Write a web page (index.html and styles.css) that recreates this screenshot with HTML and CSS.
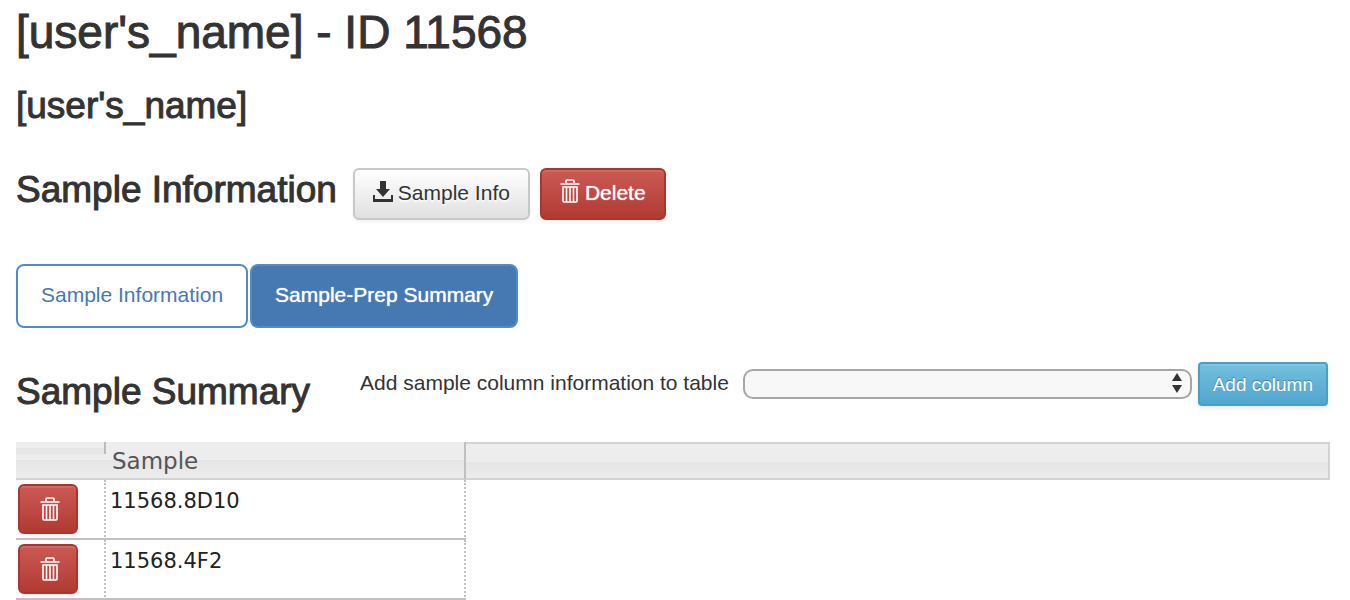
FILE: index.html
```html
<!DOCTYPE html>
<html lang="en">
<head>
<meta charset="utf-8">
<title>Sample Information</title>
<link rel="stylesheet" href="styles.css">
</head>
<body>
<svg class="defs" aria-hidden="true">
  <symbol id="trash" viewBox="0 0 20 24">
    <path d="M6 4V1.8Q6 1 7 1H13Q14 1 14 1.8V4M0.5 5H19.5M3 8V22Q3 23 4 23H16Q17 23 17 22V8ZM6.5 8V23M10 8V23M13.5 8V23" fill="none" stroke="currentColor" stroke-width="1.6"/>
  </symbol>
</svg>
<main class="page">
  <h1 class="title">[user's_name] - ID 11568</h1>
  <h2 class="subtitle">[user's_name]</h2>

  <div class="section-head">
    <h3 class="heading">Sample Information</h3>
    <button class="btn btn-default" type="button">
      <svg class="icon-download" viewBox="0 0 20 22" aria-hidden="true"><path d="M7 0H13V8H17L10 16L3 8H7ZM0 14H2V18H18V14H20V21H0Z" fill="currentColor"/></svg>
      <span>Sample Info</span>
    </button>
    <button class="btn btn-danger" type="button">
      <svg class="icon-trash" aria-hidden="true"><use href="#trash"/></svg>
      <span>Delete</span>
    </button>
  </div>

  <nav class="tabs">
    <button class="tab" type="button">Sample Information</button>
    <button class="tab tab-active" type="button">Sample-Prep Summary</button>
  </nav>

  <div class="summary">
    <h3 class="heading summary-heading">Sample Summary</h3>
    <form class="column-form">
      <label class="column-label" for="column">Add sample column information to table</label>
      <span class="select-wrap">
        <select class="select" id="column"><option></option></select>
        <svg class="select-arrows" viewBox="0 0 10 20" aria-hidden="true"><path d="M5 0L10 8H0ZM0 12H10L5 20Z" fill="#333"/></svg>
      </span>
      <button class="btn btn-info" type="button">Add column</button>
    </form>
  </div>

  <table class="grid">
    <colgroup><col class="col-action"><col class="col-sample"><col></colgroup>
    <thead>
      <tr><th class="head-action"></th><th class="head-sample" scope="col">Sample</th><th class="head-rest"></th></tr>
    </thead>
    <tbody>
      <tr>
        <td class="cell cell-action"><button class="btn btn-danger btn-row" type="button" aria-label="Delete 11568.8D10"><svg class="icon-trash" aria-hidden="true"><use href="#trash"/></svg></button></td>
        <td class="cell cell-sample">11568.8D10</td>
        <td></td>
      </tr>
      <tr>
        <td class="cell cell-action"><button class="btn btn-danger btn-row" type="button" aria-label="Delete 11568.4F2"><svg class="icon-trash" aria-hidden="true"><use href="#trash"/></svg></button></td>
        <td class="cell cell-sample">11568.4F2</td>
        <td></td>
      </tr>
    </tbody>
  </table>
</main>
</body>
</html>
```
FILE: styles.css
```css
* { box-sizing: border-box; }

body {
  margin: 0;
  background: #fff;
  color: #333;
  font: 21px/40px "Liberation Sans", Arial, sans-serif;
}

.defs { position: absolute; width: 0; height: 0; }

.page { padding: 0 20px 0 16px; }

.title, .subtitle, .heading {
  margin: 0;
  font-size: 37px;
  font-weight: normal;
  line-height: 40px;
  -webkit-text-stroke: 1px #333;
}
.title { padding-top: 12px; font-size: 46px; }
.subtitle { margin-top: 34px; }

.section-head { display: flex; align-items: center; gap: 10px; margin-top: 42px; }
.section-head .heading { padding: 0 6px 8px 0; }

.btn {
  display: flex;
  align-items: center;
  justify-content: center;
  margin: 0;
  border: 2px solid;
  border-radius: 6px;
  font: inherit;
  white-space: nowrap;
}
.section-head .btn { height: 52px; padding: 0 18px 2px; gap: 5px; }
.btn-default {
  color: #333;
  border-color: #c8c8c8;
  background: linear-gradient(#fff, #e0e0e0);
  box-shadow: 0 2px 4px rgba(0, 0, 0, .06);
  text-shadow: 0 2px 2px #fff;
}
.btn-danger {
  color: #fff;
  border-color: #ad352e;
  background: linear-gradient(#cb5a55, #b13a32);
  box-shadow: inset 0 2px 0 rgba(255, 255, 255, .1), 0 2px 4px rgba(0, 0, 0, .06);
  text-shadow: 0 0 1px #fff;
}
.btn-info {
  height: 44px;
  padding: 2px 13px 0;
  color: #fff;
  border-color: #4a9fc2;
  border-radius: 4px;
  background: linear-gradient(#74bfdd, #50a6cf);
  box-shadow: inset 0 2px 0 rgba(255, 255, 255, .1), 0 2px 4px rgba(0, 0, 0, .1);
  font-size: 19px;
  text-shadow: 0 -1px 1px rgba(0, 0, 0, .3);
}
.icon-download { width: 20px; height: 22px; margin-bottom: 2px; }
.icon-trash { width: 20px; height: 24px; margin-bottom: 4px; }

.tabs { display: flex; gap: 2px; margin-top: 44px; }
.tab {
  height: 64px;
  padding: 0 23px 2px;
  border: 2px solid #528bc7;
  border-radius: 8px;
  background: #fff;
  color: #4679b2;
  font: inherit;
}
.tab-active { background: #4679b2; color: #fff; text-shadow: 0 0 1px #fff; }

.summary { display: flex; align-items: flex-start; gap: 50px; margin-top: 34px; padding-right: 2px; }
.summary-heading { padding-top: 10px; white-space: nowrap; }
.column-form { display: flex; align-items: center; flex: 1; gap: 6px; }
.column-label { padding: 0 8px 2px 0; white-space: nowrap; }
.select-wrap { position: relative; display: flex; flex: 1; min-width: 60px; }
.select {
  appearance: none;
  width: 100%;
  height: 30px;
  border: 2px solid #a6a6a6;
  border-radius: 10px;
  background: #f8f8f8;
  font: inherit;
}
.select-arrows { position: absolute; top: 4px; right: 10px; width: 10px; height: 20px; }

.grid {
  width: 100%;
  margin-top: 30px;
  border-spacing: 0;
  table-layout: fixed;
  color: #222;
  font: 21px/26px "DejaVu Sans", Verdana, sans-serif;
}
.col-action { width: 90px; }
.col-sample { width: 360px; }
.grid th, .grid td { padding: 0; text-align: left; vertical-align: top; }
.grid th {
  height: 38px;
  border-bottom: 2px solid #d3d3d3;
  background: linear-gradient(#ededed 18px, #e5e5e5 18px, #ededed 36px);
}
.grid .head-action {
  background:
    linear-gradient(#bbb, #bbb) right top / 2px 12px no-repeat,
    linear-gradient(#ededed 6px, #e5e5e5 6px, #e8e8e8 12px, #ededed 12px, #ededed 18px, #e5e5e5 18px, #ededed 36px);
}
.grid .head-sample {
  padding: 6px 0 0 6px;
  border-right: 2px solid #c0c0c0;
  color: #555;
  font-size: 23px;
  font-weight: normal;
}
.grid .head-rest { border-top: 2px solid #d3d3d3; border-right: 2px solid #d3d3d3; }
.grid .cell { height: 60px; border-right: 2px dotted #c0c0c0; border-bottom: 2px solid #c0c0c0; }
.grid .cell-action { padding: 4px 2px; }
.grid .cell-sample { padding: 8px 4px; }
.btn-row { width: 60px; height: 50px; padding: 4px 0 0 4px; }
```
